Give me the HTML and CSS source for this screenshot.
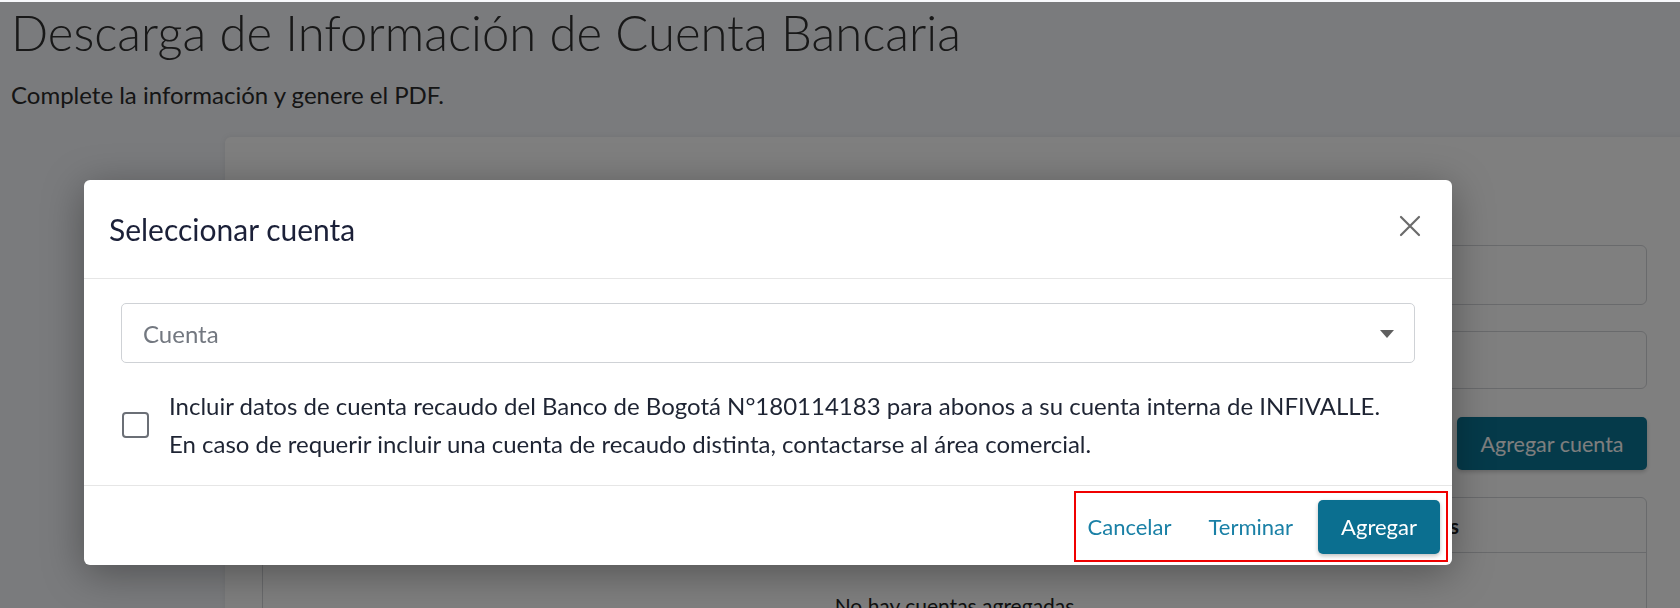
FILE: index.html
```html
<!DOCTYPE html>
<html lang="es">
<head>
<meta charset="utf-8">
<title>Descarga de Información de Cuenta Bancaria</title>
<link rel="stylesheet" href="styles.css">
</head>
<body>
<div class="page">
  <header class="page-head">
    <h1 class="page-title">Descarga de Información de Cuenta Bancaria</h1>
    <p class="page-sub">Complete la información y genere el PDF.</p>
  </header>
  <section class="card">
    <div class="form">
      <div class="field"></div>
      <div class="field"></div>
      <div class="form-actions"><button class="btn-add-account" type="button">Agregar cuenta</button></div>
    </div>
    <div class="table">
      <div class="table-head">
        <span>Banco</span><span>Tipo de cuenta</span><span>Número</span><span>Acciones</span>
      </div>
      <div class="table-empty">No hay cuentas agregadas</div>
    </div>
  </section>
</div>

<div class="backdrop"></div>

<div class="modal" role="dialog" aria-labelledby="modal-title">
  <div class="modal-header">
    <h2 class="modal-title" id="modal-title">Seleccionar cuenta</h2>
    <button class="modal-close" type="button" aria-label="Cerrar">
      <svg width="22" height="22" viewBox="0 0 22 22"><path d="M2 2 L20 20 M20 2 L2 20" stroke="#6b6b6b" stroke-width="2.2" fill="none" stroke-linecap="round"/></svg>
    </button>
  </div>
  <div class="modal-body">
    <div class="select">
      <span class="select-placeholder">Cuenta</span>
      <span class="select-caret"></span>
    </div>
    <label class="check-row">
      <span class="checkbox"></span>
      <span class="check-text">Incluir datos de cuenta recaudo del Banco de Bogotá N°180114183 para abonos a su cuenta interna de INFIVALLE.<br>En caso de requerir incluir una cuenta de recaudo distinta, contactarse al área comercial.</span>
    </label>
  </div>
  <div class="modal-footer">
    <div class="footer-actions">
      <button class="btn-link" type="button">Cancelar</button>
      <button class="btn-link" type="button">Terminar</button>
      <button class="btn-primary" type="button">Agregar</button>
    </div>
  </div>
</div>
</body>
</html>
```

FILE: styles.css
```css
* { box-sizing: border-box; }
html, body {
  margin: 0;
  height: 100%;
  overflow: hidden;
}
body {
  background: #f4f6fa;
  font-family: Lato, "Open Sans", "Liberation Sans", sans-serif;
  color: #212529;
}
button { font-family: inherit; }

.page {
  padding: 3px 0 0 11px;
}
.page-title {
  margin: 0;
  font-size: 49px;
  font-weight: 300;
  line-height: normal;
  color: #303030;
}
.page-sub {
  margin: 19px 0 0;
  font-size: 24px;
  line-height: normal;
  color: #2a2a2a;
}
.card {
  margin: 28px 0 0 214px;
  width: 1500px;
  height: 600px;
  background: #fff;
  border-radius: 6px;
  box-shadow: 0 0 6px rgba(0,0,0,.08);
  padding: 108px 0 0 37px;
}
.form {
  width: 1385px;
  display: flex;
  flex-direction: column;
  gap: 26px;
}
.field {
  height: 60px;
  border: 1px solid #d2d4d8;
  border-radius: 6px;
  background: #fff;
}
.field + .field { height: 58px; }
.form-actions {
  display: flex;
  justify-content: flex-end;
  margin-top: 2px;
}
.btn-add-account {
  width: 190px;
  height: 53px;
  border: 0;
  border-radius: 5px;
  background: #0a7494;
  color: #fdfdfd;
  font-size: 21.5px;
  box-shadow: 0 2px 4px rgba(0,0,0,.2);
}
.table {
  margin-top: 27px;
  width: 1385px;
  height: 200px;
  border: 1px solid #d2d4d8;
  border-radius: 6px;
}
.table-head {
  height: 55px;
  border-bottom: 1px solid #d2d4d8;
  display: grid;
  grid-template-columns: 365px 365px 366px 1fr;
  align-items: center;
  padding: 0 16px;
  font-size: 21px;
  font-weight: 700;
  color: #222;
}
.table-empty {
  text-align: center;
  padding-top: 40px;
  font-size: 21px;
  color: #222;
}

.backdrop {
  position: fixed;
  inset: 0;
  background: linear-gradient(to bottom, rgba(255,255,255,.4) 0, rgba(255,255,255,.4) 2px, rgba(0,0,0,.5) 2px);
}

.modal {
  position: absolute;
  left: 84px;
  top: 180px;
  width: 1368px;
  height: 385px;
  background: #fff;
  border-radius: 6px;
  box-shadow: 0 8px 40px rgba(0,0,0,.35);
  display: flex;
  flex-direction: column;
}
.modal-header {
  height: 99px;
  border-bottom: 1px solid #e6e6e6;
  display: flex;
  align-items: center;
  justify-content: space-between;
  padding: 0 31px 0 25px;
}
.modal-title {
  margin: 0;
  font-size: 30px;
  font-weight: 400;
  color: #1b2038;
}
.modal-close {
  border: 0;
  background: none;
  padding: 0;
  width: 22px;
  height: 22px;
  margin-top: -6px;
  display: flex;
}
.modal-body {
  padding: 24px 37px 0;
  height: 207px;
  border-bottom: 1px solid #e6e6e6;
}
.select {
  height: 60px;
  border: 1px solid #cfd2d6;
  border-radius: 5px;
  display: flex;
  align-items: center;
  justify-content: space-between;
  padding: 0 20px 0 21px;
}
.select-placeholder {
  font-size: 24px;
  color: #737880;
}
.select-caret {
  width: 0;
  height: 0;
  border-left: 7.5px solid transparent;
  border-right: 7.5px solid transparent;
  border-top: 8px solid #5f5f5f;
  margin-top: 2px;
}
.check-row {
  margin-top: 24px;
  display: flex;
  align-items: center;
  gap: 20px;
}
.checkbox {
  flex: none;
  width: 27px;
  height: 26px;
  border: 2px solid #6b6f76;
  border-radius: 4px;
  margin-left: 1px;
}
.check-text {
  font-size: 24px;
  line-height: 38px;
  color: #1e2433;
}
.modal-footer {
  flex: 1;
  display: flex;
  justify-content: flex-end;
  align-items: flex-start;
  padding: 5px 4px 0;
}
.footer-actions {
  border: 2px solid #f00000;
  height: 71px;
  display: flex;
  align-items: center;
  gap: 13px;
  padding: 0 6px 0 0;
}
.btn-link {
  border: 0;
  background: none;
  padding: 0 12px;
  font-size: 22px;
  color: #1a80a6;
  height: 54px;
}
.btn-primary {
  width: 122px;
  height: 54px;
  border: 0;
  border-radius: 5px;
  background: #0b6f90;
  color: #fff;
  font-size: 22px;
  box-shadow: 0 2px 4px rgba(0,0,0,.25);
}
```
